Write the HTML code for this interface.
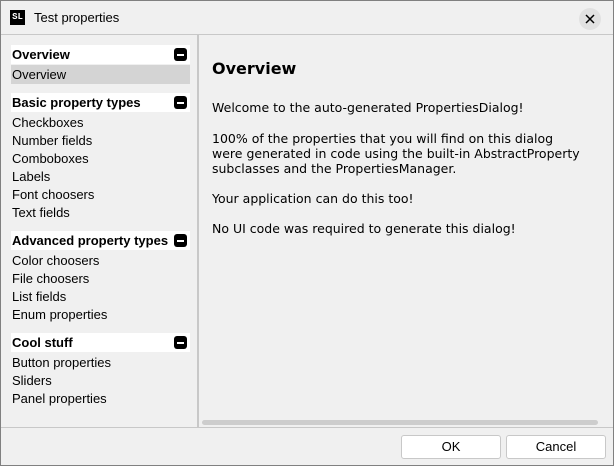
<!DOCTYPE html><html><head><style>
body{margin:0;width:614px;height:466px;overflow:hidden;background:#f0f0f0;font-family:"Liberation Sans",sans-serif;}
.win{position:absolute;left:0;top:0;width:612px;height:464px;border:1px solid #808080;background:#f0f0f0;}
.tb{position:absolute;left:0;top:0;width:612px;height:33px;border-bottom:1px solid #c8c8c8;}
.logo{position:absolute;left:9px;top:9px;width:15px;height:15px;background:#000;color:#fff;font:bold 9px "Liberation Mono",monospace;line-height:15px;text-align:center;}
.title{position:absolute;left:33px;top:9px;font-size:13px;color:#000;}
.close{position:absolute;left:578px;top:7px;width:22px;height:22px;border-radius:11px;background:#e1e1e1;}
.left{position:absolute;left:0;top:34px;width:196px;height:392px;}
.div{position:absolute;left:196px;top:34px;width:2px;height:392px;background:#c8c8c8;}
.hdr{position:absolute;left:10px;width:179px;height:19px;background:#fff;font-weight:bold;font-size:13px;line-height:19px;}
.hdr span{padding-left:1px}
.mn{position:absolute;right:3px;top:3px;width:13px;height:13px;background:#000;border-radius:3px;}
.mn:after{content:"";position:absolute;left:3px;top:6px;width:7px;height:2px;background:#fff;}
.it{position:absolute;left:11px;font-size:13px;line-height:18px;}
.sel{position:absolute;left:10px;top:30px;width:179px;height:19px;background:#d4d4d4;}
.r{position:absolute;left:211px;font-family:"DejaVu Sans",sans-serif;font-size:12.5px;color:#000;line-height:15px;}
.sb{position:absolute;left:201px;top:419px;width:396px;height:5px;border-radius:3px;background:#cdcdcd;}
.bot{position:absolute;left:0;top:426px;width:612px;height:38px;border-top:1px solid #c8c8c8;}
.btn{position:absolute;top:7px;width:98px;height:22px;background:#fff;border:1px solid #c8c8c8;border-radius:3px;text-align:center;line-height:22px;font-size:13px;}
</style></head><body><div class="win">
<div class="tb"><div class="logo">SL</div><div class="title">Test properties</div><div class="close"><svg width="22" height="22"><path d="M7 7L15 15M15 7L7 15" stroke="#000" stroke-width="1.5"/></svg></div></div>
<div class="left">
<div class="hdr" style="top:10px"><span>Overview</span><div class="mn"></div></div>
<div class="sel"></div><div class="it" style="top:31px">Overview</div>
<div class="hdr" style="top:58px"><span>Basic property types</span><div class="mn"></div></div>
<div class="it" style="top:79px">Checkboxes<br>Number fields<br>Comboboxes<br>Labels<br>Font choosers<br>Text fields</div>
<div class="hdr" style="top:196px"><span>Advanced property types</span><div class="mn"></div></div>
<div class="it" style="top:217px">Color choosers<br>File choosers<br>List fields<br>Enum properties</div>
<div class="hdr" style="top:298px"><span>Cool stuff</span><div class="mn"></div></div>
<div class="it" style="top:319px">Button properties<br>Sliders<br>Panel properties</div>
</div>
<div class="div"></div>
<div class="r" style="top:58px;font-size:16px;font-weight:bold;line-height:20px">Overview</div>
<div class="r" style="top:99px">Welcome to the auto-generated PropertiesDialog!</div>
<div class="r" style="top:130px">100% of the properties that you will find on this dialog<br>were generated in code using the built-in AbstractProperty<br>subclasses and the PropertiesManager.</div>
<div class="r" style="top:190px">Your application can do this too!</div>
<div class="r" style="top:220px">No UI code was required to generate this dialog!</div>
<div class="sb"></div>
<div class="bot"><div class="btn" style="left:400px">OK</div><div class="btn" style="left:505px">Cancel</div></div>
</div></body></html>
